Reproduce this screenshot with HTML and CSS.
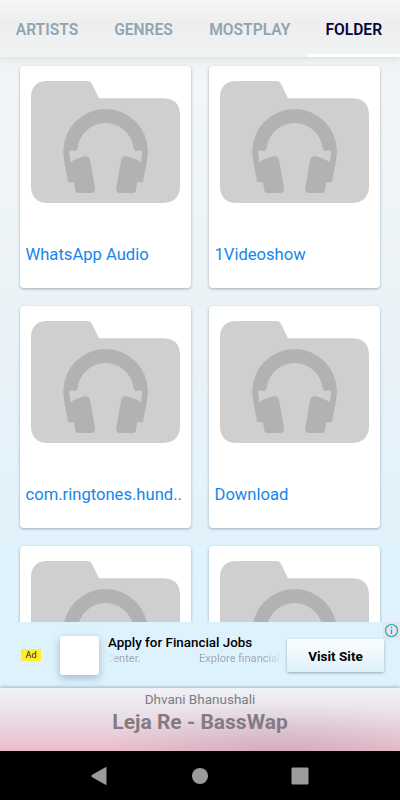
FILE: index.html
```html
<!DOCTYPE html>
<html>
    <head>
        <meta charset="utf-8">
        <title>Folders</title>
        <link rel="stylesheet" href="styles.css">
    </head>
    <body>
        <svg class="defs">
            <symbol id="folder" viewBox="0 0 149 122">
                <path fill="#cfcfcf" d="M15 0H57Q59.500 0 60.700 2.500L68 17.300H133Q149 18 149 34V106Q148 121 133 122H15Q1 121 0 106V15Q1 1 15 0Z"/>
                <g id="half" fill="#b2b2b2">
                    <path d="M74.700 28A42.300 42.300 0 0 0 32.300 70C32.300 79 35.500 91 37.300 101.300H43L44.300 109.500Q44.800 112 47 112H60.500Q64.500 111.500 64 107.300L59 78.500Q57.500 74.500 53 75.300Q46 77 39.300 81.300L38 69.700H44.500Q46.200 69.500 46.700 66.500A28.200 28.200 0 0 1 74.700 42Z"/>
                </g>
                <use href="#half" transform="translate(149.200 0) scale(-1 1)"/>
            </symbol>
        </svg>
        <div id="wrap">
            <div id="tabs">
                <div class="tab artists">ARTISTS</div>
                <div class="tab genres">GENRES</div>
                <div class="tab mostplay">MOSTPLAY</div>
                <div class="tab active">FOLDER</div>
            </div>
            <div id="folders">
                <div class="card"><svg class="icon"><use href="#folder"/></svg><div class="name">WhatsApp Audio</div></div>
                <div class="card"><svg class="icon"><use href="#folder"/></svg><div class="name">1Videoshow</div></div>
                <div class="card"><svg class="icon"><use href="#folder"/></svg><div class="name">com.ringtones.hund..</div></div>
                <div class="card"><svg class="icon"><use href="#folder"/></svg><div class="name">Download</div></div>
                <div class="card"><svg class="icon"><use href="#folder"/></svg></div>
                <div class="card"><svg class="icon"><use href="#folder"/></svg></div>
            </div>
            <div id="ad">
                <div class="badge">Ad</div>
                <div class="thumb"></div>
                <div class="info">
                    <div class="title">Apply for Financial Jobs</div>
                    <div class="marquee"><span>Center.</span><span>Explore financial</span></div>
                </div>
                <div class="visit">Visit Site</div>
                <svg class="choices" viewBox="0 0 17 17">
                    <path fill="#e2e6e9" d="M0 0H17V17H0Z"/>
                    <circle cx="8.500" cy="8.500" r="6" fill="none" stroke="#13acc9" stroke-width="1.200"/>
                    <path fill="#13acc9" d="M7.900 4.800H9.100V6.200H7.900ZM7.900 7.400H9.100V12H7.900Z"/>
                </svg>
            </div>
            <div id="player">
                <div class="artist">Dhvani Bhanushali</div>
                <div class="song">Leja Re - BassWap</div>
            </div>
            <div id="nav">
                <svg viewBox="0 0 20 20"><path d="M15 1.700V18.300Q15 19.300 14 18.700L.3 10.900Q-.7 10 .3 9.100L14 1.300Q15 .8 15 1.700Z" transform="translate(1.500)"/></svg>
                <svg viewBox="0 0 20 20"><circle cx="10" cy="10" r="8"/></svg>
                <svg viewBox="0 0 20 20"><rect x="1.500" y="1.500" width="17" height="17" rx="1.200"/></svg>
            </div>
        </div>
    </body>
</html>
```

FILE: styles.css
```css
body {
    margin: 0;
    font-family: Roboto, sans-serif;
}
.defs {
    display: none;
}
#wrap {
    width: 400px;
    height: 800px;
    overflow: hidden;
    display: flex;
    flex-direction: column;
    background: linear-gradient(#f5f5f5 0, #eff2f5 60px, #f1f6fa 85px, #ecf3f7 290px, #e0f2fc 560px, #def2fe 690px);
}
#tabs {
    height: 57px;
    flex: none;
    display: flex;
    background: linear-gradient(#f6f6f6, #eeeeee 22px, #eff0f0 38px, #f2f3f3);
    box-shadow: 0 1px 6px rgba(90, 90, 90, 0.14);
}
.tab {
    box-sizing: border-box;
    height: 57px;
    line-height: 60px;
    text-align: center;
    font-size: 15.6px;
    font-weight: 600;
    color: #8fa5b2;
}
.artists {
    width: 94px;
}
.genres {
    width: 99px;
}
.mostplay {
    width: 114.5px;
    padding-right: 1px;
}
.active {
    width: 92.5px;
    color: #05053f;
    border-bottom: 3px solid #fff;
}
#folders {
    height: 565px;
    flex: none;
    box-sizing: border-box;
    padding: 9px 20px 0;
    display: grid;
    grid-template-columns: 171px 171px;
    grid-auto-rows: 222px;
    gap: 18px;
    overflow: hidden;
}
.card {
    background: #fff;
    border-radius: 4px;
    box-shadow: 0 1px 3px rgba(50, 70, 85, 0.4);
}
.icon {
    display: block;
    width: 149px;
    height: 122px;
    margin: 15px 0 0 11px;
}
.name {
    margin: 42px 0 0 5.5px;
    font-size: 16.6px;
    line-height: 20px;
    color: #1286ee;
    white-space: nowrap;
}
#ad {
    position: relative;
    height: 66px;
    flex: none;
    display: flex;
    align-items: flex-start;
    background: #def2fe;
}
.badge {
    width: 20px;
    height: 12px;
    margin: 27px 0 0 21px;
    background: #ffeb2f;
    font-size: 9px;
    line-height: 13px;
    text-align: center;
    color: #222;
}
.thumb {
    width: 39px;
    height: 39px;
    margin: 14px 0 0 19px;
    background: #fff;
    border-radius: 3px;
    box-shadow: 0 3px 8px rgba(50, 75, 90, 0.35);
}
.info {
    width: 171px;
    margin: 12px 0 0 9px;
    white-space: nowrap;
}
.title {
    font-size: 13.4px;
    font-weight: 500;
    line-height: 17px;
    color: #000;
}
.marquee {
    display: flex;
    justify-content: space-between;
    margin: 0 -1px 0 -2px;
    font-size: 11.1px;
    line-height: 16px;
    color: #a0a8ac;
    -webkit-mask-image: linear-gradient(90deg, transparent 2px, #000 13px, #000 158px, transparent 178px);
}
.visit {
    width: 97px;
    height: 33px;
    margin: 17px 0 0 8px;
    border-radius: 2px;
    background: linear-gradient(#fbfdfe, #dff1fc);
    box-shadow: 0 1px 3px rgba(50, 75, 90, 0.45);
    font-size: 13.5px;
    font-weight: 700;
    line-height: 34px;
    text-align: center;
    color: #000;
}
.choices {
    position: absolute;
    top: 0;
    right: 0;
    width: 17px;
    height: 17px;
}
#player {
    position: relative;
    height: 63px;
    flex: none;
    text-align: center;
    background: radial-gradient(ellipse 170px 50px at 280px 63px, rgba(170, 145, 165, 0.36), transparent), linear-gradient(#eef3f7, #eadfe7 28px, #eabccb);
    box-shadow: 0 -1px 3px rgba(60, 90, 110, 0.4);
}
.artist {
    padding-top: 3px;
    font-size: 13.5px;
    line-height: 16px;
    color: #7c7c82;
}
.song {
    font-size: 21px;
    font-weight: 700;
    line-height: 31px;
    color: #847b82;
}
#nav {
    position: relative;
    height: 49px;
    flex: none;
    display: flex;
    justify-content: center;
    align-items: center;
    gap: 80px;
    background: #000;
}
#nav svg {
    width: 20px;
    height: 20px;
    fill: #9b9b9b;
}
```
